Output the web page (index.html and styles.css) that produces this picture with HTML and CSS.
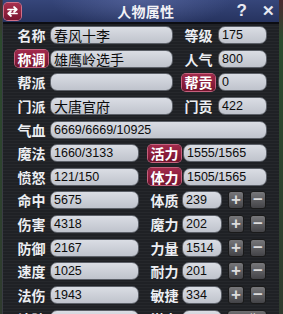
FILE: index.html
```html
<!DOCTYPE html>
<html lang="zh">
<head>
<meta charset="utf-8">
<link rel="stylesheet" href="styles.css">
</head>
<body>
<div class="win">
  <div class="titlebar">
    <div class="swap">
      <svg width="17" height="17" viewBox="0 0 17 17">
        <path d="M4 6.5h8.5M10 4l2.8 2.5L10 9" fill="none" stroke="#fff" stroke-width="1.7" stroke-linecap="round" stroke-linejoin="round"/>
        <path d="M13 10.5H4.5M7 8l-2.8 2.5L7 13" fill="none" stroke="#fff" stroke-width="1.7" stroke-linecap="round" stroke-linejoin="round"/>
      </svg>
    </div>
    <div class="title">人物属性</div>
    <div class="tools"><span class="help">?</span><span class="close">✕</span></div>
  </div>
  <div class="panel">
    <div class="row">
      <span class="lbl">名称</span><span class="box w123">春风十李</span>
      <span class="lbl r">等级</span><span class="box w49">175</span>
    </div>
    <div class="row">
      <span class="lbl red">称调</span><span class="box w123">雄鹰岭选手</span>
      <span class="lbl r">人气</span><span class="box w49">800</span>
    </div>
    <div class="row">
      <span class="lbl">帮派</span><span class="box w123"></span>
      <span class="lbl r red">帮贡</span><span class="box w49">0</span>
    </div>
    <div class="row">
      <span class="lbl">门派</span><span class="box w123">大唐官府</span>
      <span class="lbl r">门贡</span><span class="box w49">422</span>
    </div>
    <div class="row">
      <span class="lbl">气血</span><span class="box w217">6669/6669/10925</span>
    </div>
    <div class="row">
      <span class="lbl">魔法</span><span class="box w89">1660/3133</span>
      <span class="lbl c red">活力</span><span class="box w84">1555/1565</span>
    </div>
    <div class="row">
      <span class="lbl">愤怒</span><span class="box w89">121/150</span>
      <span class="lbl c red">体力</span><span class="box w84">1505/1565</span>
    </div>
    <div class="row">
      <span class="lbl">命中</span><span class="box w89">5675</span>
      <span class="lbl d">体质</span><span class="box w40">239</span>
      <span class="btn">+</span><span class="btn">−</span>
    </div>
    <div class="row">
      <span class="lbl">伤害</span><span class="box w89">4318</span>
      <span class="lbl d">魔力</span><span class="box w40">202</span>
      <span class="btn">+</span><span class="btn">−</span>
    </div>
    <div class="row">
      <span class="lbl">防御</span><span class="box w89">2167</span>
      <span class="lbl d">力量</span><span class="box w40">1514</span>
      <span class="btn">+</span><span class="btn">−</span>
    </div>
    <div class="row">
      <span class="lbl">速度</span><span class="box w89">1025</span>
      <span class="lbl d">耐力</span><span class="box w40">201</span>
      <span class="btn">+</span><span class="btn">−</span>
    </div>
    <div class="row">
      <span class="lbl">法伤</span><span class="box w89">1943</span>
      <span class="lbl d">敏捷</span><span class="box w40">334</span>
      <span class="btn">+</span><span class="btn">−</span>
    </div>
    <div class="row">
      <span class="lbl">法防</span><span class="box w89">1366</span>
      <span class="lbl d">潜力</span><span class="box w40">0</span>
      <span class="wide">预览</span>
    </div>
  </div>
</div>
</body>
</html>
```
FILE: styles.css
```css
html, body {
  margin: 0;
  padding: 0;
}
body {
  width: 283px;
  height: 314px;
  overflow: hidden;
  background: linear-gradient(to bottom, #4a2a30 0, #2c4a2e 40px, #2f3a2e 100%);
  font-family: "Noto Sans CJK SC", "Noto Sans", sans-serif;
}
.win {
  margin-left: 2px;
  width: 276px;
  height: 314px;
  background: repeating-linear-gradient(to bottom, #1f2125 0, #1f2125 2px, #26282c 2px, #26282c 3px);
  border-left: 1px solid #3a3d44;
  overflow: hidden;
}
.titlebar {
  height: 22px;
  display: flex;
  align-items: center;
  background:
    radial-gradient(ellipse 90px 30px at 50% 0, rgba(110,125,185,0.45), rgba(110,125,185,0) 100%),
    linear-gradient(to bottom, #36467a, #26335f);
  border-bottom: 2px solid #0c0d12;
}
.swap {
  width: 17px;
  height: 17px;
  margin-left: 1px;
  border-radius: 4px;
  background: linear-gradient(to bottom, #a8304e, #7a1530);
  box-shadow: 0 0 0 1px #d07088;
  display: flex;
}
.title {
  flex: 1;
  text-align: center;
  color: #f2f2f6;
  font-size: 14px;
  font-weight: bold;
  margin-left: 34px;
  letter-spacing: 0.3px;
}
.tools {
  display: flex;
  align-items: center;
  gap: 15px;
  margin-right: 4px;
  color: #e8eaf2;
  font-family: "Liberation Sans", Arial, sans-serif;
  font-weight: bold;
  font-size: 17px;
}
.close { font-size: 15px; }
.panel {
  padding: 2px 0 0 12px;
  display: flex;
  flex-direction: column;
  gap: 5.65px;
}
.row {
  display: flex;
  align-items: center;
  height: 18px;
}
.lbl {
  width: 33px;
  height: 18px;
  margin-right: 2px;
  display: flex;
  align-items: center;
  justify-content: center;
  color: #eceef2;
  font-size: 14px;
  font-weight: bold;
  line-height: 1;
  flex: none;
}
.lbl.red {
  height: 17px;
  border-radius: 4px;
  background: linear-gradient(to bottom, #a32a4c, #74142e);
  box-shadow: 0 0 0 1px #c4607c;
  color: #fff;
}
.lbl.r { margin-left: 9px; margin-right: 3px; }
.lbl.c { margin-left: 9px; margin-right: 2px; }
.lbl.d { margin-left: 9px; margin-right: 1px; }
.box {
  height: 18px;
  box-sizing: border-box;
  border-radius: 7px;
  border: 1px solid #5c6068;
  background: linear-gradient(to bottom, #dadde4, #bfc3cc);
  color: #0c0c0c;
  font-family: "Liberation Sans", Arial, sans-serif;
  font-size: 12.5px;
  line-height: 16px;
  padding-left: 3px;
  white-space: nowrap;
  overflow: hidden;
  flex: none;
}
.w123 { width: 123px; font-size: 14px; font-family: "Noto Sans CJK SC", sans-serif; }
.w49 { width: 49px; }
.w217 { width: 217px; }
.w89 { width: 89px; }
.w84 { width: 84px; }
.w40 { width: 40px; }
.btn {
  width: 16px;
  height: 18px;
  margin-left: 6px;
  box-sizing: border-box;
  border-radius: 3px;
  border: 1px solid #1a1a1a;
  background: linear-gradient(to bottom, #77777a, #434347);
  color: #dcdcdc;
  font-family: "Liberation Sans", Arial, sans-serif;
  font-weight: bold;
  font-size: 17px;
  line-height: 15px;
  text-align: center;
  flex: none;
}
.wide {
  width: 40px;
  height: 17px;
  margin-left: 5px;
  box-sizing: border-box;
  border-radius: 4px;
  border: 1px solid #1a1a1a;
  background: linear-gradient(to bottom, #6e6e70, #3e3e42);
  color: #e0e0e0;
  font-size: 12px;
  text-align: center;
  line-height: 15px;
}
```
